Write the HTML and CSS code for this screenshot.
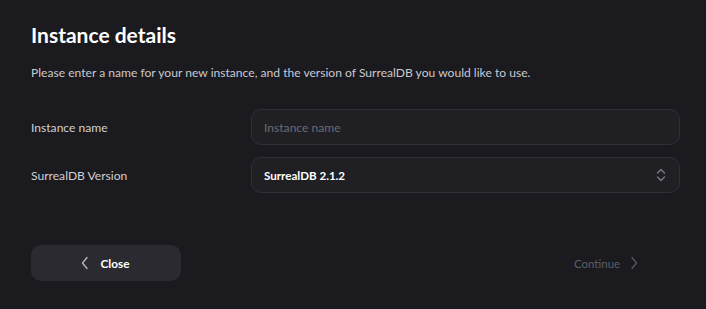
FILE: index.html
```html
<!DOCTYPE html>
<html>
<head>
<meta charset="utf-8">
<link rel="stylesheet" href="styles.css">
</head>
<body>
<div class="modal">
  <h1 class="title">Instance details</h1>
  <p class="desc">Please enter a name for your new instance, and the version of SurrealDB you would like to use.</p>
  <div class="form">
    <div class="row">
      <label class="label">Instance name</label>
      <div class="field"><span class="placeholder">Instance name</span></div>
    </div>
    <div class="row">
      <label class="label">SurrealDB Version</label>
      <div class="field select">
        <span class="value">SurrealDB 2.1.2</span>
        <svg class="updown" width="10" height="14" viewBox="0 0 10 14" fill="none" stroke="#7d7d85" stroke-width="1.3" stroke-linecap="round" stroke-linejoin="round"><path d="M1.5 5 L5 1.5 L8.5 5"/><path d="M1.5 9 L5 12.5 L8.5 9"/></svg>
      </div>
    </div>
  </div>
  <div class="actions">
    <button class="btn close">
      <svg width="8" height="14" viewBox="0 0 8 14" fill="none" stroke="#b5b5bc" stroke-width="1.4" stroke-linecap="round" stroke-linejoin="round"><path d="M6 1.5 L1.5 7 L6 12.5"/></svg>
      <span>Close</span>
    </button>
    <button class="btn continue">
      <span>Continue</span>
      <svg width="8" height="14" viewBox="0 0 8 14" fill="none" stroke="#55555c" stroke-width="1.4" stroke-linecap="round" stroke-linejoin="round"><path d="M2 1.5 L6.5 7 L2 12.5"/></svg>
    </button>
  </div>
</div>
</body>
</html>
```

FILE: styles.css
```css
html, body {
  margin: 0;
  padding: 0;
  background: #1a1a1f;
  font-family: Lato, "Noto Sans", sans-serif;
  color: #d0d0d6;
}
.modal {
  padding: 21px 26px 0 31px;
}
.title {
  margin: 0;
  font-size: 21px;
  font-weight: 700;
  color: #ffffff;
  line-height: 28px;
}
.desc {
  margin: 15px 0 0;
  font-size: 12.1px;
  line-height: 18px;
  color: #c9c9d0;
}
.form {
  margin-top: 27px;
  display: flex;
  flex-direction: column;
  gap: 12px;
}
.row {
  display: flex;
  align-items: center;
}
.label {
  width: 220px;
  font-size: 12.1px;
  color: #d0d0d6;
}
.field {
  flex: 1;
  height: 34px;
  border: 1px solid #2f2f36;
  border-radius: 10px;
  background: #1f1f24;
  display: flex;
  align-items: center;
  padding: 0 12px;
  font-size: 12.1px;
}
.placeholder {
  color: #6b6b73;
}
.select {
  justify-content: space-between;
}
.value {
  color: #ffffff;
  font-weight: 700;
  font-size: 11.6px;
}
.updown {
  margin-right: 1px;
}
.actions {
  margin-top: 52px;
  display: flex;
  justify-content: space-between;
  align-items: center;
}
.btn {
  font-family: inherit;
  border: none;
  height: 36px;
  display: flex;
  align-items: center;
  justify-content: center;
  gap: 12px;
  font-size: 11.8px;
  cursor: pointer;
}
.close {
  width: 150px;
  background: #2a2a30;
  border-radius: 10px;
  color: #ffffff;
  font-weight: 700;
  padding-right: 8px;
}
.continue {
  background: transparent;
  color: #5e5e66;
  font-size: 11.4px;
  gap: 10px;
  padding: 0 42px 0 0;
}
```
